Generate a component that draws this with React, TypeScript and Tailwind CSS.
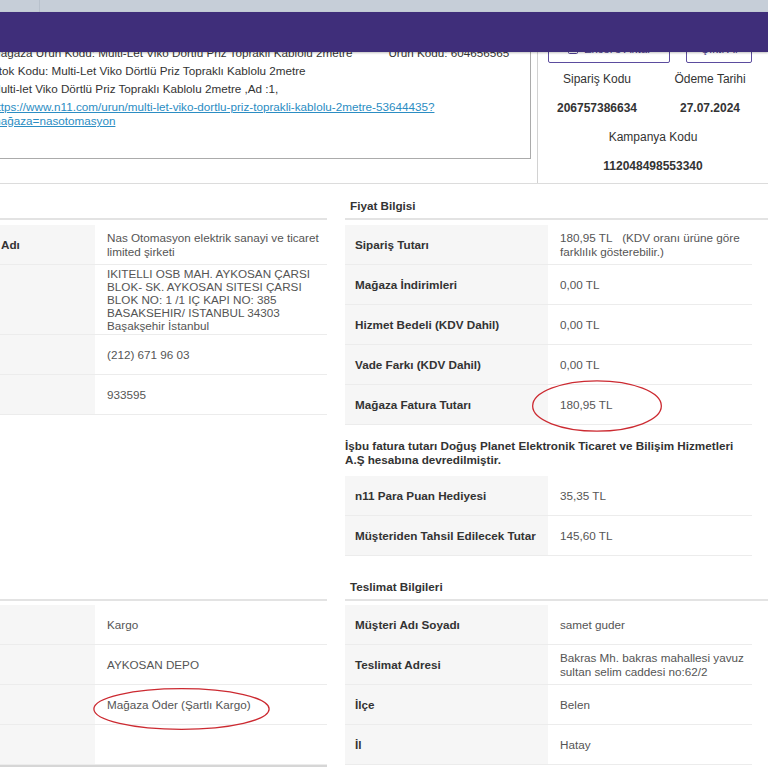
import React from "react";
import { Upload } from "lucide-react";

type Row = { label?: string; value?: React.ReactNode; mark?: React.ReactNode };

// red hand-drawn circle the user put on the screenshot
const Mark = ({ className }: { className: string }) => (
  <svg
    className={`pointer-events-none absolute ${className}`}
    viewBox="0 0 200 60"
    preserveAspectRatio="none"
  >
    <ellipse
      cx="100"
      cy="30"
      rx="99"
      ry="29"
      fill="none"
      stroke="#cc2a31"
      strokeWidth="1.3"
      vectorEffect="non-scaling-stroke"
    />
  </svg>
);

const SectionHead = ({ title }: { title?: string }) => (
  <div className="flex h-[36px] items-end border-b-2 border-[#e3e3e3] pb-[5px] pl-[5px] font-bold text-[#333]">
    {title}
  </div>
);

const InfoTable = ({ rows, cols, className = "" }: { rows: Row[]; cols: string; className?: string }) => (
  <div className={`grid ${cols} ${className}`}>
    {rows.map((r, i) => (
      <React.Fragment key={i}>
        <div className="flex min-h-[40px] items-center whitespace-nowrap border-b border-[#ececec] bg-[#f6f6f6] px-[10px] py-[2px] font-bold text-[#333]">
          {r.label}
        </div>
        <div className="relative flex min-h-[40px] items-center whitespace-nowrap border-b border-[#ececec] py-[2px] pl-[12px] pr-[4px] text-[#555]">
          <div>{r.value}</div>
          {r.mark}
        </div>
      </React.Fragment>
    ))}
  </div>
);

const storeRows: Row[] = [
  { label: "Mağaza Adı", value: <>Nas Otomasyon elektrik sanayi ve ticaret<br />limited şirketi</> },
  {
    label: "Adres",
    value: (
      <span className="block leading-[13px]">
        IKITELLI OSB MAH. AYKOSAN ÇARSI<br />
        BLOK- SK. AYKOSAN SITESI ÇARSI<br />
        BLOK NO: 1 /1 IÇ KAPI NO: 385<br />
        BASAKSEHIR/ ISTANBUL 34303<br />
        Başakşehir İstanbul
      </span>
    ),
  },
  { label: "Tel", value: "(212) 671 96 03" },
  { label: "VKN", value: "933595" },
];

const priceRows: Row[] = [
  { label: "Sipariş Tutarı", value: <>180,95 TL&nbsp;&nbsp; (KDV oranı ürüne göre<br />farklılık gösterebilir.)</> },
  { label: "Mağaza İndirimleri", value: "0,00 TL" },
  { label: "Hizmet Bedeli (KDV Dahil)", value: "0,00 TL" },
  { label: "Vade Farkı (KDV Dahil)", value: "0,00 TL" },
  {
    label: "Mağaza Fatura Tutarı",
    value: "180,95 TL",
    mark: <Mark className="left-[-16px] top-[-5px] h-[52px] w-[130px]" />,
  },
];

const payRows: Row[] = [
  { label: "n11 Para Puan Hediyesi", value: "35,35 TL" },
  { label: "Müşteriden Tahsil Edilecek Tutar", value: "145,60 TL" },
];

const cargoRows: Row[] = [
  { label: "Tip", value: "Kargo" },
  { label: "Depo", value: "AYKOSAN DEPO" },
  {
    label: "Ödeme",
    value: "Mağaza Öder (Şartlı Kargo)",
    mark: <Mark className="left-[-2px] top-[3px] h-[42px] w-[177px]" />,
  },
  { label: "", value: "" },
];

const deliveryRows: Row[] = [
  { label: "Müşteri Adı Soyadı", value: "samet guder" },
  { label: "Teslimat Adresi", value: <>Bakras Mh. bakras mahallesi yavuz<br />sultan selim caddesi no:62/2</> },
  { label: "İlçe", value: "Belen" },
  { label: "İl", value: "Hatay" },
];

export default function App() {
  return (
    <div className="relative h-[768px] w-[768px] overflow-hidden bg-white font-['Liberation_Sans',Arial,sans-serif] text-[11.7px] leading-[14px] text-[#333]">
      {/* browser strip + fixed purple header */}
      <div className="flex h-[12px] bg-[#c6ced8]">
        <div className="w-[40px] border-r border-[#b8c1cc]" />
      </div>
      <div className="absolute left-0 top-[12px] z-10 h-[40px] w-full bg-[#3f2e7a] shadow-[0_1px_2px_rgba(0,0,0,0.25)]" />

      <div className="-ml-[54px] w-[822px]">
        {/* product + order summary */}
        <div className="flex h-[172px] border-b border-[#dcdcdc]">
          <div className="h-[147px] w-[585px] border-b border-r border-[#ababab] pl-[45px] pt-[32px]">
            <p className="whitespace-nowrap leading-[18px]">
              <span>Mağaza Ürün Kodu: Multi-Let Viko Dörtlü Priz Topraklı Kablolu 2metre</span>
              <span className="ml-[36px]">Ürün Kodu: 604656565</span>
            </p>
            <p className="whitespace-nowrap leading-[18px]">Stok Kodu: Multi-Let Viko Dörtlü Priz Topraklı Kablolu 2metre</p>
            <p className="whitespace-nowrap leading-[18px]">Multi-let Viko Dörtlü Priz Topraklı Kablolu 2metre ,Ad :1,</p>
            <a className="mt-[2px] block whitespace-nowrap text-[#2b8dc3] underline">
              https://www.n11.com/urun/multi-let-viko-dortlu-priz-toprakli-kablolu-2metre-53644435?
              <br />
              mağaza=nasotomasyon
            </a>
          </div>
          <div className="ml-[6px] flex-1 border-l border-[#d2d2d2]">
            <div className="mt-[25px] flex">
              <button className="ml-[10px] flex h-[26px] w-[122px] items-center justify-center gap-[5px] rounded-[2px] border border-[#5b4c9e] bg-white pb-[2px] text-[#4b3c90]">
                <Upload size={12} strokeWidth={2} />
                Excel'e Aktar
              </button>
              <button className="ml-[16px] h-[26px] w-[66px] rounded-[2px] border border-[#5b4c9e] bg-white pb-[2px] text-[#4b3c90]">
                Çıktı Al
              </button>
            </div>
            <div className="ml-[2px] mt-[1px] grid w-[226px] grid-cols-[114px_112px] text-center text-[12px]">
              <div className="flex h-[29px] items-center justify-center">Sipariş Kodu</div>
              <div className="flex h-[29px] items-center justify-center">Ödeme Tarihi</div>
              <div className="flex h-[29px] items-center justify-center font-bold">206757386634</div>
              <div className="flex h-[29px] items-center justify-center font-bold">27.07.2024</div>
              <div className="col-span-2 flex h-[29px] items-center justify-center">Kampanya Kodu</div>
              <div className="col-span-2 flex h-[29px] items-center justify-center font-bold">112048498553340</div>
            </div>
          </div>
        </div>

        {/* detail sections */}
        <div className="grid grid-cols-[381px_423px] gap-x-[18px] gap-y-[9px]">
          <section>
            <SectionHead />
            <InfoTable rows={storeRows} cols="grid-cols-[149px_232px]" className="mt-[5px]" />
          </section>
          <section>
            <SectionHead title="Fiyat Bilgisi" />
            <InfoTable rows={priceRows} cols="grid-cols-[203px_204px]" className="mt-[5px] w-[407px]" />
            <p className="mt-[14px] whitespace-nowrap font-bold text-[#333]">
              İşbu fatura tutarı Doğuş Planet Elektronik Ticaret ve Bilişim Hizmetleri
              <br />
              A.Ş hesabına devredilmiştir.
            </p>
            <InfoTable rows={payRows} cols="grid-cols-[203px_204px]" className="mt-[9px] w-[407px]" />
          </section>
          <section>
            <SectionHead />
            <InfoTable rows={cargoRows} cols="grid-cols-[149px_232px]" className="mt-[4px]" />
            <div className="h-[2px] bg-[#d6d6d6]" />
          </section>
          <section>
            <SectionHead title="Teslimat Bilgileri" />
            <InfoTable rows={deliveryRows} cols="grid-cols-[203px_204px]" className="mt-[4px] w-[407px]" />
          </section>
        </div>
      </div>
    </div>
  );
}
